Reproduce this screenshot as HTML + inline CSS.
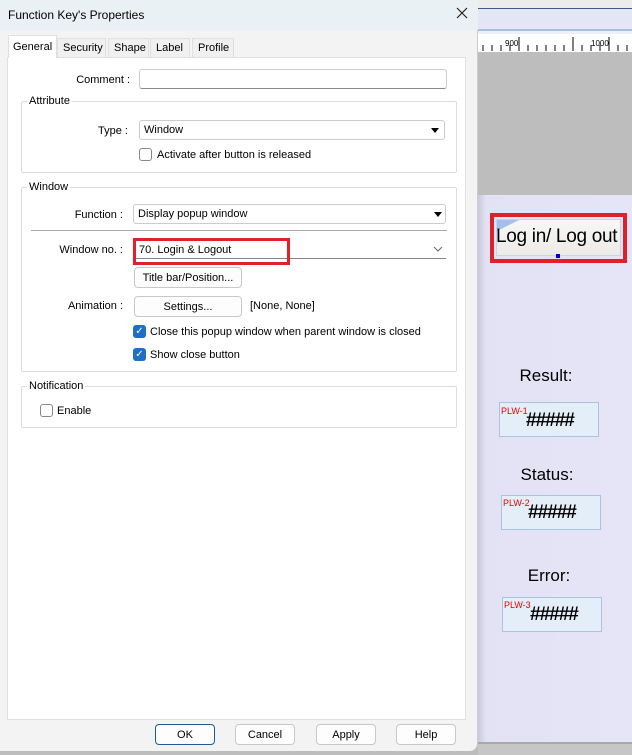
<!DOCTYPE html>
<html><head><style>
*{box-sizing:border-box;margin:0;padding:0}
body{width:632px;height:755px;overflow:hidden;position:relative;font-family:"Liberation Sans",sans-serif;font-size:11px;color:#000;background:#bdbdbd}
.a{position:absolute}
.dlg{left:0;top:0;width:478px;height:751px;background:#f3f3f3;border-radius:0 0 8px 0;border-right:1px solid #ccc}
.tb{left:0;top:0;width:478px;height:30px;background:#e9f1f5}
.panel{left:7px;top:57px;width:459px;height:663px;background:#fff;border:1px solid #e0e0e0}
.tab{top:38px;height:20px;background:#f0f0f0;border:1px solid #e0e0e0;padding:3px 5px 0;font-size:11px}
.grp{border:1px solid #dcdcdc;border-radius:2px}
.leg{background:#fff;padding:0 2px;font-size:11px}
.inp{border:1px solid #ccc;border-bottom:1px solid #888;background:#fff;border-radius:3px;height:20px;padding:3px 4px 0;font-size:11px}
.btn{border:1px solid #c8c8c8;background:#fdfdfd;border-radius:4px;height:21px;text-align:center;padding-top:4px;font-size:11px}
.cb{width:13px;height:13px;border:1px solid #888;border-radius:3px;background:#fff}
.cbx{width:13px;height:13px;border-radius:3px;background:#1f6fc6;color:#fff;font-size:10px;text-align:center;line-height:13px}
.r{text-align:right}
.arrow{width:0;height:0;border-left:4px solid transparent;border-right:4px solid transparent;border-top:5px solid #000}
.lab{font-size:17px;color:#000;text-align:center}
.num{width:100px;height:35px;background:#e4eef8;border:1px solid #a9c4e0}
.plw{color:#e00;font-size:9px}
.hash{font-size:19px;font-weight:bold;letter-spacing:-1px}
</style></head><body>
<!-- right side -->
<div class="a" style="left:478px;top:0;width:154px;height:8px;background:#ececec"></div>
<div class="a" style="left:478px;top:8px;width:154px;height:1px;background:#3c5a8c"></div>
<div class="a" style="left:478px;top:9px;width:154px;height:21px;background:#e4e5f6"></div>
<div class="a" style="left:478px;top:29px;width:154px;height:2px;background:#a9bed8"></div>
<div class="a" style="left:478px;top:31px;width:154px;height:3px;background:#eef0f8"></div>
<div class="a" style="left:478px;top:34px;width:154px;height:18px;background:#fff">
<svg width="154" height="18" style="position:absolute;left:0;top:0">
<g stroke="#000" stroke-width="1">
<path d="M5 11v6M14 11v6M23 11v6M32 11v6M41 3v14M50 11v6M59 11v6M68 11v6M77 11v6M95 3v14M86 11v6M104 11v6M113 11v6M122 11v6M131 3v14M140 11v6M149 11v6"/></g>
<text x="27" y="12" font-size="8" font-family="Liberation Sans">900</text>
<text x="113" y="12" font-size="8" font-family="Liberation Sans">1000</text>
</svg></div>
<div class="a" style="left:478px;top:52px;width:154px;height:143px;background:#bdbdbd"></div>
<div class="a" style="left:478px;top:195px;width:154px;height:547px;background:linear-gradient(90deg,#c9c9d8 0,#e3e2f4 8px,#e6e5f7 100%)"></div>
<div class="a" style="left:478px;top:742px;width:154px;height:13px;background:#c6c6c6;border-top:2px solid #a8a8a8"></div>
<!-- login button -->
<div class="a" style="left:490px;top:213px;width:137px;height:50px;border:4px solid #e0202a"></div>
<div class="a" style="left:496px;top:219px;width:125px;height:37px;background:linear-gradient(#f7f7f7,#ecebe6);border:1px solid #c6d6e8"></div>
<div class="a" style="left:497px;top:220px;width:0;height:0;border-top:11px solid #9fc2e8;border-right:22px solid transparent"></div>
<div class="a" style="left:496px;top:226px;font-size:19px;letter-spacing:-0.3px;white-space:nowrap">Log in/ Log out</div>
<div class="a" style="left:556px;top:254px;width:4px;height:4px;background:#00c"></div>
<div class="a lab" style="left:498px;top:366px;width:96px">Result:</div>
<div class="a num" style="left:499px;top:402px"></div>
<div class="a plw" style="left:501px;top:406px">PLW-1</div>
<div class="a hash" style="left:526px;top:410px">#####</div>
<div class="a lab" style="left:499px;top:465px;width:96px">Status:</div>
<div class="a num" style="left:501px;top:495px"></div>
<div class="a plw" style="left:503px;top:498px">PLW-2</div>
<div class="a hash" style="left:528px;top:502px">#####</div>
<div class="a lab" style="left:501px;top:566px;width:96px">Error:</div>
<div class="a num" style="left:502px;top:597px"></div>
<div class="a plw" style="left:504px;top:600px">PLW-3</div>
<div class="a hash" style="left:530px;top:604px">#####</div>
<!-- dialog -->
<div class="a dlg"></div>
<div class="a tb"></div>
<div class="a" style="left:8px;top:8px;font-size:12px">Function Key's Properties</div>
<svg class="a" style="left:456px;top:7px" width="12" height="12"><path d="M1 1L11 11M11 1L1 11" stroke="#222" stroke-width="1.2"/></svg>
<div class="a panel"></div>
<div class="a tab" style="left:57px;width:49px">Security</div>
<div class="a tab" style="left:108px;width:41px">Shape</div>
<div class="a tab" style="left:150px;width:40px">Label</div>
<div class="a tab" style="left:192px;width:42px">Profile</div>
<div class="a" style="left:8px;top:35px;width:49px;height:23px;background:#fff;border:1px solid #e0e0e0;border-bottom:none;padding:5px 0 0 4px">General</div>
<div class="a r" style="left:30px;top:74px;width:100px">Comment :</div>
<div class="a inp" style="left:139px;top:69px;width:308px"></div>
<div class="a grp" style="left:21px;top:101px;width:436px;height:72px"></div>
<div class="a leg" style="left:27px;top:95px">Attribute</div>
<div class="a r" style="left:30px;top:125px;width:98px">Type :</div>
<div class="a inp" style="left:139px;top:120px;width:306px;border-bottom-color:#ccc">Window</div>
<div class="a arrow" style="left:431px;top:128px"></div>
<div class="a cb" style="left:139px;top:148px"></div>
<div class="a" style="left:157px;top:149px">Activate after button is released</div>
<div class="a grp" style="left:21px;top:187px;width:436px;height:185px"></div>
<div class="a leg" style="left:27px;top:181px">Window</div>
<div class="a r" style="left:30px;top:209px;width:93px">Function :</div>
<div class="a inp" style="left:133px;top:204px;width:313px;border-bottom-color:#ccc">Display popup window</div>
<div class="a arrow" style="left:434px;top:212px"></div>
<div class="a" style="left:31px;top:230px;width:416px;height:1px;background:#aaa"></div>
<div class="a r" style="left:30px;top:244px;width:93px">Window no. :</div>
<div class="a" style="left:133px;top:258px;width:313px;height:1px;background:#888"></div>
<div class="a" style="left:133px;top:238px;width:157px;height:27px;border:3px solid #e0202a"></div>
<div class="a" style="left:139px;top:244px">70. Login &amp; Logout</div>
<svg class="a" style="left:433px;top:246px" width="10" height="6"><path d="M1 1L5 5L9 1" stroke="#666" fill="none"/></svg>
<div class="a btn" style="left:134px;top:267px;width:108px">Title bar/Position...</div>
<div class="a r" style="left:30px;top:300px;width:93px">Animation :</div>
<div class="a btn" style="left:134px;top:296px;width:108px">Settings...</div>
<div class="a" style="left:250px;top:300px">[None, None]</div>
<div class="a cbx" style="left:133px;top:325px">✓</div>
<div class="a" style="left:150px;top:326px">Close this popup window when parent window is closed</div>
<div class="a cbx" style="left:133px;top:348px">✓</div>
<div class="a" style="left:150px;top:349px">Show close button</div>
<div class="a grp" style="left:21px;top:386px;width:436px;height:42px"></div>
<div class="a leg" style="left:27px;top:380px">Notification</div>
<div class="a cb" style="left:40px;top:404px"></div>
<div class="a" style="left:57px;top:405px">Enable</div>
<div class="a btn" style="left:155px;top:724px;width:60px;border-color:#1c5c9c">OK</div>
<div class="a btn" style="left:235px;top:724px;width:60px">Cancel</div>
<div class="a btn" style="left:316px;top:724px;width:60px">Apply</div>
<div class="a btn" style="left:396px;top:724px;width:60px">Help</div>
</body></html>
